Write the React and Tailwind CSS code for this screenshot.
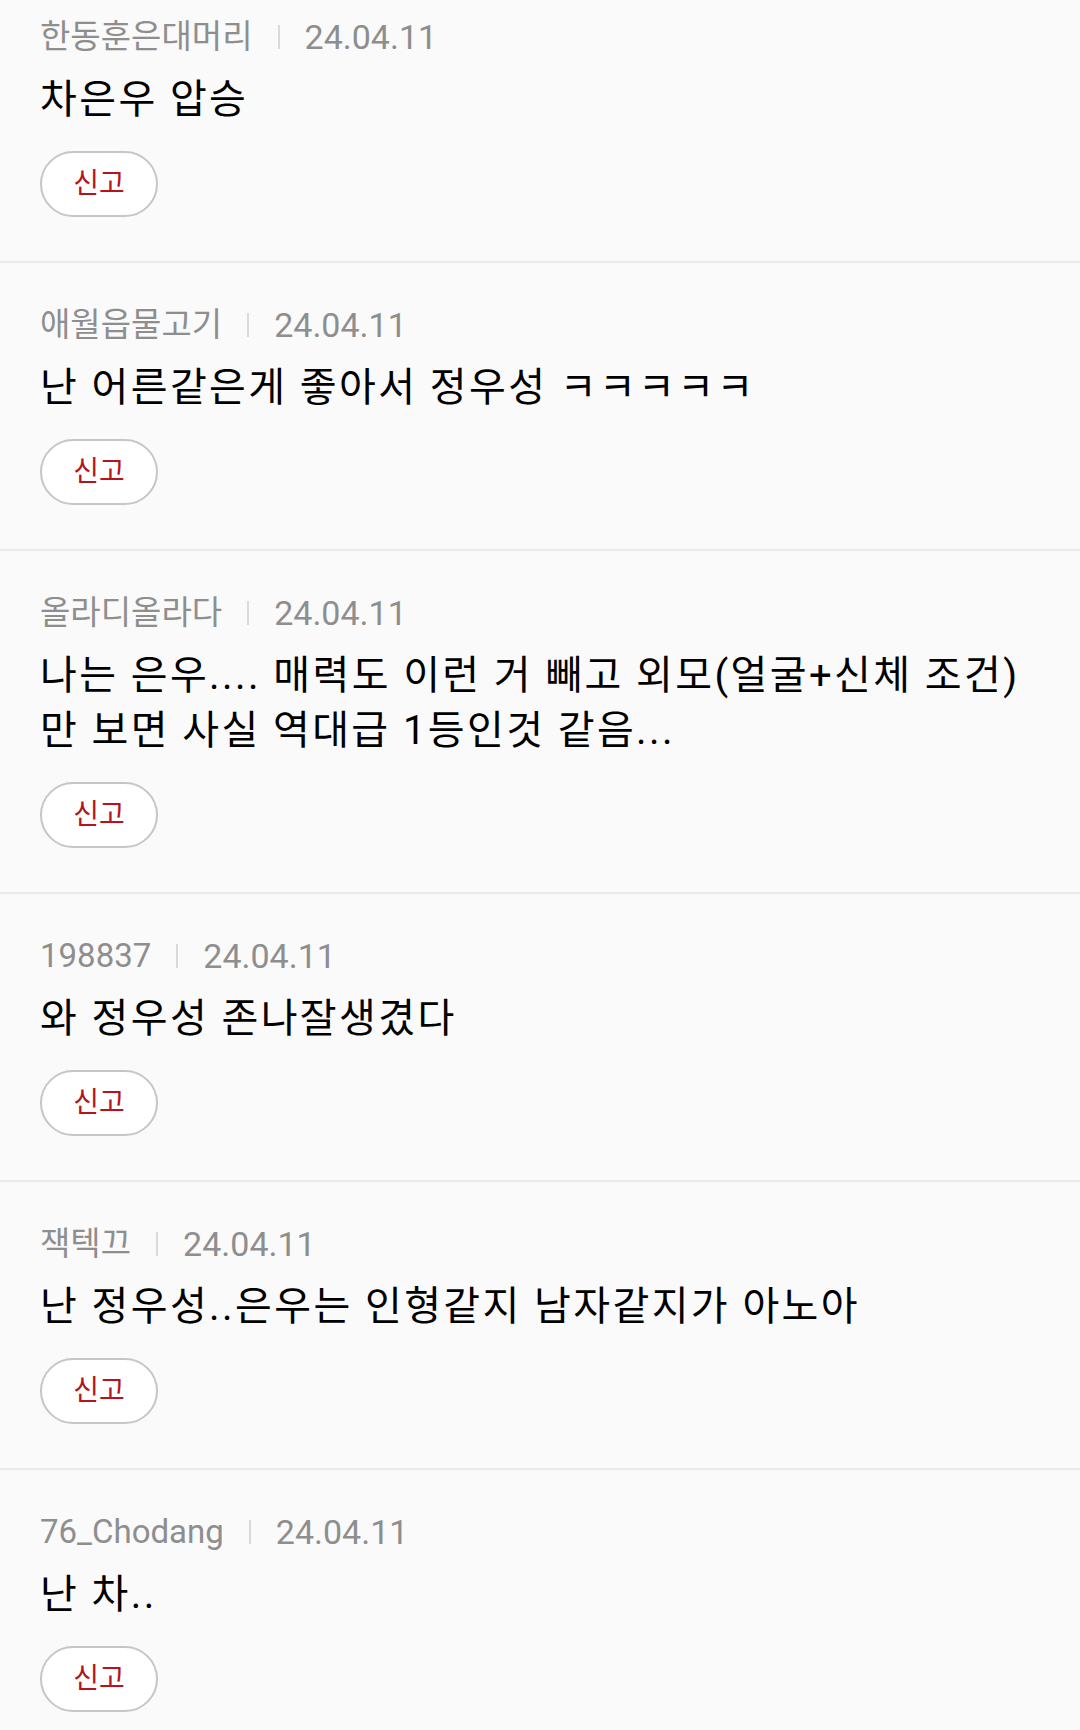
const comments = [
  { nick: "한동훈은대머리", date: "24.04.11", text: ["차은우 압승"] },
  { nick: "애월읍물고기", date: "24.04.11", text: ["난 어른같은게 좋아서 정우성 ㅋㅋㅋㅋㅋ"] },
  {
    nick: "올라디올라다",
    date: "24.04.11",
    text: ["나는 은우.... 매력도 이런 거 빼고 외모(얼굴+신체 조건)", "만 보면 사실 역대급 1등인것 같음..."],
  },
  { nick: "198837", date: "24.04.11", text: ["와 정우성 존나잘생겼다"] },
  { nick: "잭텍끄", date: "24.04.11", text: ["난 정우성..은우는 인형같지 남자같지가 아노아"] },
  { nick: "76_Chodang", date: "24.04.11", text: ["난 차.."] },
];

const Comment = ({ item, first }) => {
  return (
    <div className={`px-[40px] pb-[44px] border-b-2 border-[#ebebeb] ${first ? "pt-[17px]" : "pt-[42px]"}`}>
      {/* nickname | date */}
      <div className="flex items-center h-[40px] text-[#8e8e8e]">
        <span className="text-[33px]">{item.nick}</span>
        <span className="mx-[25px] w-[2px] h-[24px] bg-[#dadada]"></span>
        <span className="text-[34px]">{item.date}</span>
      </div>

      {/* comment body */}
      <div className="mt-[15px] text-[40px] leading-[55px] tracking-[2.4px] text-black">
        {item.text.map((line, i) => (
          <div key={i} className="whitespace-nowrap">
            {line}
          </div>
        ))}
      </div>

      <button className="mt-[24px] w-[118px] h-[66px] rounded-full border-2 border-[#c6c6c6] bg-white text-[28px] text-[#b5141d] flex items-center justify-center">
        신고
      </button>
    </div>
  );
};

export default function App() {
  return (
    <div
      className="w-[1080px] h-[1730px] overflow-hidden bg-[#fafafa]"
      style={{ fontFamily: 'Roboto, "Noto Sans CJK KR", sans-serif' }}
    >
      {comments.map((c, i) => (
        <Comment key={i} item={c} first={i === 0} />
      ))}
    </div>
  );
}
